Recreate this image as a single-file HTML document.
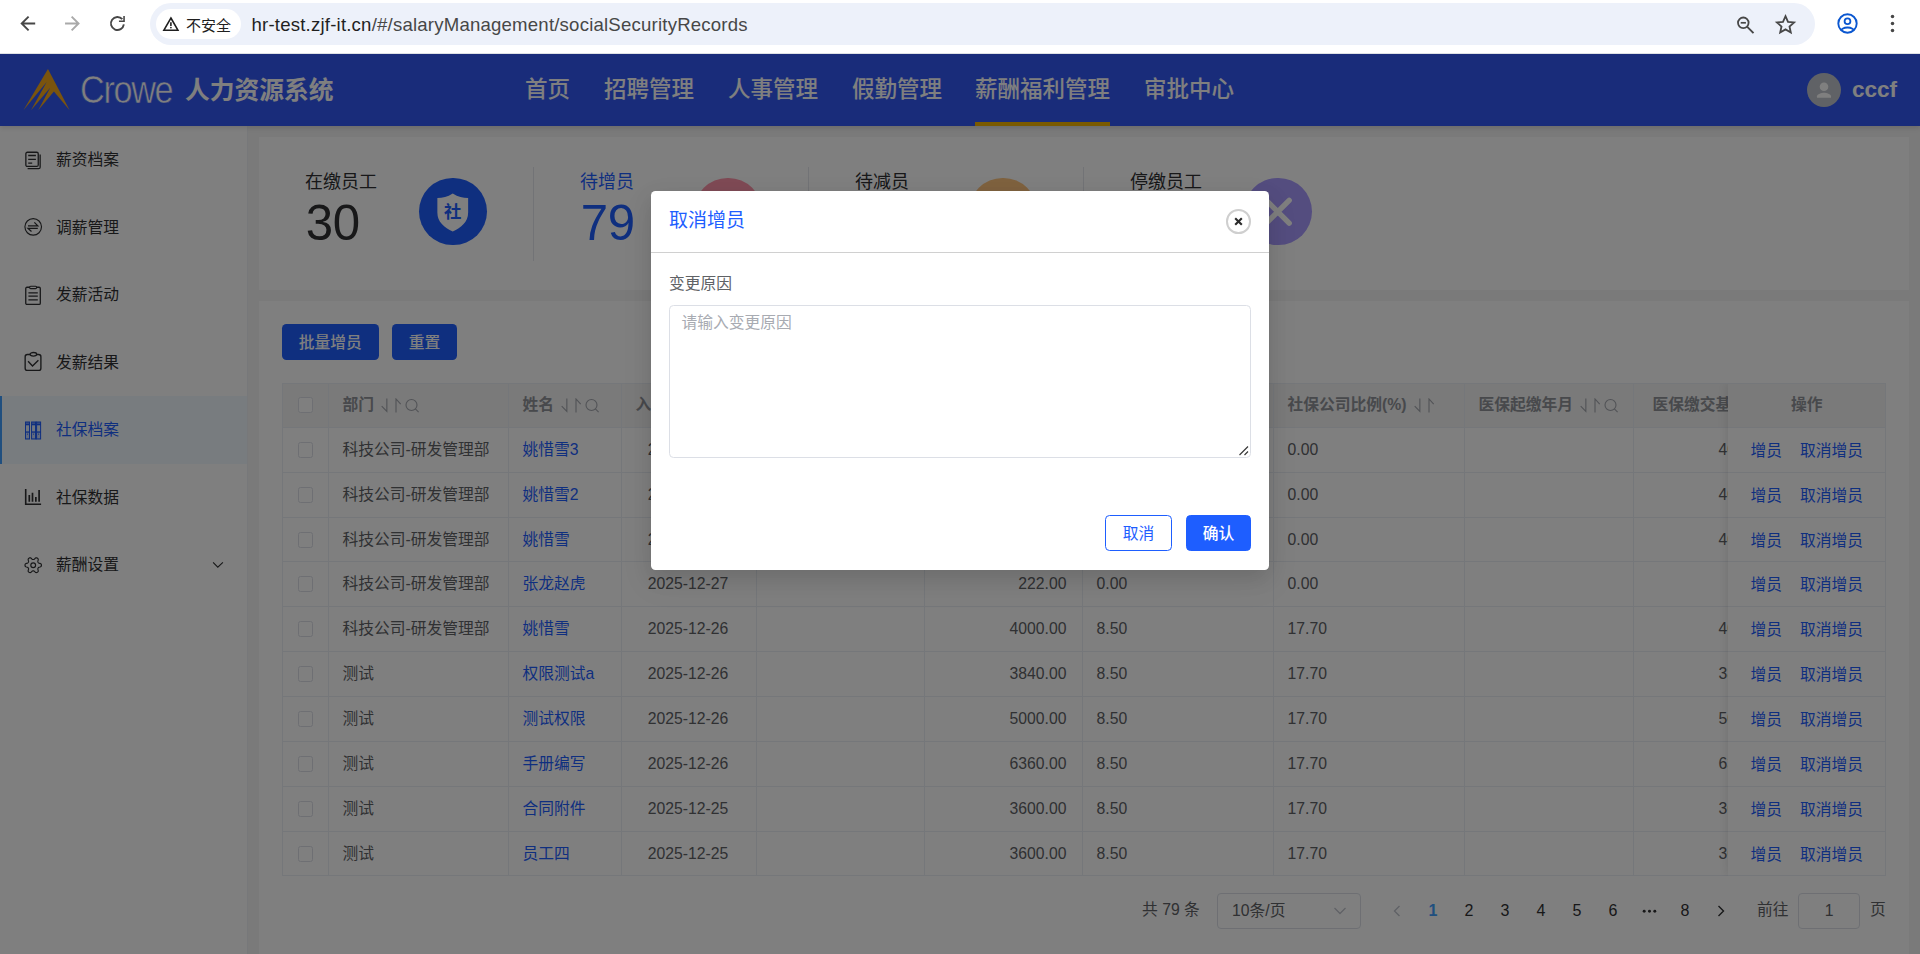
<!DOCTYPE html>
<html lang="zh-CN">
<head>
<meta charset="utf-8">
<title>社保档案</title>
<style>
*{box-sizing:border-box;margin:0;padding:0}
html,body{width:1920px;height:954px;overflow:hidden;background:#fff}
body{position:relative;font-family:"Liberation Sans","Noto Sans CJK SC",sans-serif;font-size:15.75px;color:#303133;-webkit-font-smoothing:antialiased}
.abs{position:absolute}
/* ---------- browser chrome ---------- */
#chrome{position:absolute;left:0;top:0;width:1920px;height:54px;background:#fff;border-bottom:1px solid #dfe1e5;z-index:50}
#chrome svg{position:absolute;overflow:visible}
#omni{position:absolute;left:150px;top:3px;width:1665px;height:42px;border-radius:21px;background:#edf1fa}
#chip{position:absolute;left:6px;top:6px;width:85px;height:30px;border-radius:15px;background:#fff}
#chip span{position:absolute;left:30px;top:2px;line-height:30px;font-size:15px;color:#1f1f1f;white-space:nowrap}
#url span{color:#474747}
#url{position:absolute;left:101.500px;top:0.800px;line-height:41px;font-size:18.600px;color:#1f1f1f;white-space:nowrap;letter-spacing:0.2px}
/* ---------- app header ---------- */
#hdr{position:absolute;left:0;top:54px;width:1920px;height:72px;background:#3259f5;z-index:5;box-shadow:0 2px 5px rgba(0,0,0,.12)}
#hdr .crowe{position:absolute;left:79.500px;top:0.300px;line-height:72px;font-size:38.500px;color:#fff;letter-spacing:-1.500px;font-weight:400;-webkit-text-stroke:0.600px #3259f5;transform:scaleX(0.89);transform-origin:0 50%}
#hdr .sys{position:absolute;left:185px;top:1.700px;line-height:70px;font-size:24.75px;font-weight:700;color:#fff;white-space:nowrap}
#hdr .nav{position:absolute;top:1.500px;line-height:68px;font-size:22.5px;color:#fff;white-space:nowrap;font-weight:500}
#hdr .nav.on:after{content:"";position:absolute;left:0;right:0;top:66.500px;height:4px;background:#f5b400}
#hdr .ava{position:absolute;left:1807px;top:19px;width:34px;height:34px;border-radius:50%;background:#c0c4cc;overflow:hidden}
#hdr .user{position:absolute;left:1852px;top:1px;line-height:70px;font-size:22.5px;font-weight:700;color:#fff}
/* ---------- sidebar ---------- */
#side{position:absolute;left:0;top:126px;width:247px;height:828px;background:#fff;z-index:2}
.mi{position:absolute;left:0;width:247px;height:67.5px;line-height:67.5px;color:#303133;font-size:15.75px}
.mi span{position:absolute;left:56px;top:0;white-space:nowrap}
.mi svg{position:absolute;left:23px;top:23.5px;width:20px;height:20px;overflow:visible}
.mi.on{background:#f1f8ff;color:#1e5eff;box-shadow:inset 2px 0 0 #409eff}
/* ---------- main ---------- */
#main{position:absolute;left:247px;top:126px;width:1673px;height:828px;background:#f4f4f4;box-shadow:inset 1px 0 0 #eff1f5}
.card{position:absolute;background:#fff}

/* stats */
.st{position:absolute;top:0;width:275px;height:153px}
.st:after{content:"";position:absolute;right:0;top:30px;width:1px;height:93.500px;background:#e4e7ed}
.st:last-child:after{display:none}
.st .lab{position:absolute;left:46px;top:33.300px;font-size:18px;line-height:24px;color:#303133;white-space:nowrap}
.st .num{position:absolute;left:46.700px;top:57.500px;font-size:49.200px;line-height:56px;color:#303133;letter-spacing:-0.3px}
.st.on .lab,.st.on .num{color:#1e5eff}
.st .cir{position:absolute;left:160px;top:40.500px;width:67.5px;height:67.5px;border-radius:50%}
.st .cir svg{width:100%;height:100%;display:block}
.btn{position:absolute;height:35.600px;line-height:38.800px;font-weight:500;border-radius:4.500px;background:#1e5eff;color:#fff;text-align:center;font-size:15.75px}
/* table */
#tb{position:absolute;border:1px solid #ebeef5;border-right:none;border-bottom:none;overflow:hidden;color:#606266;background:#fff}
#tb .hr{position:absolute;left:0;right:0;background:#f4f4f4;border-bottom:1px solid #ebeef5}
#tb .rl{position:absolute;left:0;right:0;height:1px;background:#ebeef5}
#tb .vl{position:absolute;top:0;bottom:0;width:1px;background:#ebeef5}
#tb .c{position:absolute;padding:0 13.5px;white-space:nowrap;overflow:hidden}
#tb .c.h{color:#909399;margin-top:-1px}
#tb .hc .cb{top:13px}
#tb .c.h b{font-weight:700}
#tb .c.ctr{text-align:center}
#tb .c.r{text-align:right;padding-right:15.500px}
#tb .c.x{padding-left:84.500px;padding-right:0}
#tb .c.h.x{padding-left:18.500px}
#tb .c.d{padding-right:15.500px}
#tb .c.ck{padding:0}
#tb a{color:#1e5eff}
#tb .op a{margin:0 9px}
#tb .c.op{padding-right:15.500px}
#tb #fx .c.h{padding-right:13px}
.cb{position:absolute;left:14.500px;top:13.800px;width:15.750px;height:15.750px;border:1px solid #dcdfe6;border-radius:2.500px;background:#fff}
.si{width:21px;height:15px;vertical-align:-2.500px;margin-left:7px}
.sq{width:14px;height:15px;vertical-align:-2.500px;margin-left:2.500px}
#fx{position:absolute;background:#fff;border-right:1px solid #ebeef5;box-shadow:0 0 10px rgba(0,0,0,.12)}
/* pagination */
#pgn{position:absolute;left:0;width:1673px;height:34.5px;line-height:34.5px;color:#303133;font-size:15.75px}
#pgn>*{position:absolute;top:0;white-space:nowrap}
#pgn .pt{color:#606266;font-size:15.75px;margin-top:-1px}
#pgn .pn{width:36px;text-align:center;font-size:16px;color:#303133}
#pgn .pn.on{color:#409eff;font-weight:700}
#pgn .sel{top:-0.500px;height:35.500px;border:1px solid #dcdfe6;border-radius:4px;color:#606266;background:#fff}
#pgn .sel span{position:absolute;left:14px;top:0;line-height:34px}
#pgn .sel svg{position:absolute;right:13px;top:10px;width:14px;height:14px}
#pgn .ar{width:12px;height:14px;top:10px}
#pgn .dots{width:17px;height:6.400px;top:14.200px}
/* overlay + dialog */
#mask{position:absolute;left:0;top:54px;width:1920px;height:900px;background:rgba(0,0,0,.5);z-index:20}
#dlg{position:absolute;left:651px;top:191px;width:617.800px;height:379px;background:#fff;border-radius:4.500px;z-index:30;box-shadow:0 12px 32px 4px rgba(0,0,0,.05),0 8px 20px rgba(0,0,0,.1)}
#dlg .ttl{position:absolute;left:18px;top:16px;line-height:28px;font-size:19px;color:#1e5eff}
#dlg .hl{position:absolute;left:0;right:0;top:61px;height:1px;background:#d0d0d0}
#dlg .x{position:absolute;left:575.200px;top:18px;width:24.600px;height:24.600px;border:2px solid #cfcfcf;border-radius:50%}
#dlg .x svg{position:absolute;left:5.800px;top:5.800px;width:9px;height:9px}
#dlg .lb{position:absolute;left:18px;top:81.300px;line-height:24px;color:#606266;font-size:15.75px}
#dlg .ta{position:absolute;left:18px;top:114px;width:581.500px;height:152.500px;border:1px solid #dcdfe6;border-radius:4.500px}
#dlg .ta span{position:absolute;left:11.500px;top:5px;line-height:24px;color:#a8abb2;font-size:15.75px}
#dlg .ta svg{position:absolute;right:1px;bottom:1px;width:11px;height:11px}
#dlg .b{position:absolute;top:324px;height:36px;line-height:35.400px;border-radius:4.500px;text-align:center;font-size:15.75px;border:1px solid #1e5eff}
</style>
</head>
<body>

<!-- ================= browser chrome ================= -->
<div id="chrome">
  <!-- back -->
  <svg style="left:18px;top:14px" width="20" height="20" viewBox="0 0 20 20"><path d="M17.200 9.500H4.500M10.600 2.600L3.700 9.500l6.900 6.900" fill="none" stroke="#474747" stroke-width="1.900"/></svg>
  <!-- forward -->
  <svg style="left:63px;top:14px" width="20" height="20" viewBox="0 0 20 20"><path d="M2.050 9.500h12.700M8.650 2.600l6.900 6.900-6.900 6.900" fill="none" stroke="#a9a9a9" stroke-width="1.900"/></svg>
  <!-- reload -->
  <svg style="left:108px;top:14px" width="20" height="20" viewBox="0 0 20 20"><path d="M14.300 5.200A6.500 6.500 0 1 0 15.850 10.400" fill="none" stroke="#474747" stroke-width="1.900"/><path d="M16.050 2.100v5.150h-5.100" fill="none" stroke="#474747" stroke-width="1.600"/></svg>
  <div id="omni">
    <div id="chip">
      <svg style="left:6px;top:7px" width="18" height="16" viewBox="0 0 18 16"><path d="M8.900 2L15.900 14.200H1.900z" fill="none" stroke="#1f1f1f" stroke-width="1.600" stroke-linejoin="miter"/><path d="M8.900 6.300v3.700" stroke="#1f1f1f" stroke-width="1.600"/><circle cx="8.900" cy="11.600" r="0.850" fill="#1f1f1f"/></svg>
      <span>不安全</span>
    </div>
    <div id="url">hr-test.zjf-it.cn<span>/#/salaryManagement/socialSecurityRecords</span></div>
    <!-- zoom-out magnifier -->
    <svg style="left:1586px;top:12px" width="20" height="20" viewBox="0 0 20 20"><circle cx="7.300" cy="7.800" r="5.300" fill="none" stroke="#474747" stroke-width="1.800"/><path d="M11.300 11.900l6.200 6.200" stroke="#474747" stroke-width="1.900"/><path d="M4.700 7.800h5.200" stroke="#474747" stroke-width="1.700"/></svg>
    <!-- star -->
    <svg style="left:1625px;top:11px" width="21" height="20" viewBox="0 0 21 20"><path d="M10.500 2.200l2.500 5.600 6.100 0.600-4.600 4.100 1.300 6-5.300-3.100-5.300 3.100 1.300-6-4.600-4.100 6.100-0.600z" fill="none" stroke="#474747" stroke-width="1.800" stroke-linejoin="miter"/></svg>
  </div>
  <!-- profile -->
  <svg style="left:1836px;top:12px" width="23" height="23" viewBox="0 0 23 23"><defs><clipPath id="pc"><circle cx="11.500" cy="11.500" r="9.200"/></clipPath></defs><circle cx="11.500" cy="11.500" r="9.200" fill="none" stroke="#0b57d0" stroke-width="1.900"/><circle cx="11.500" cy="9.300" r="2.900" fill="none" stroke="#0b57d0" stroke-width="1.800"/><ellipse cx="11.500" cy="19.500" rx="7" ry="4" fill="none" stroke="#0b57d0" stroke-width="1.800" clip-path="url(#pc)"/></svg>
  <!-- menu dots -->
  <svg style="left:1888px;top:13px" width="9" height="21" viewBox="0 0 9 21"><circle cx="4.500" cy="3.600" r="1.750" fill="#474747"/><circle cx="4.500" cy="10.500" r="1.750" fill="#474747"/><circle cx="4.500" cy="17.400" r="1.750" fill="#474747"/></svg>
</div>

<!-- ================= app header ================= -->
<div id="hdr">
  <svg class="abs" style="left:22px;top:14px" width="50" height="44" viewBox="0 0 50 44"><path d="M25.960 1.100L47.660 42.300 31.900 23.400 16.200 42.300 28.200 19.700 9 42.300 24.700 14 1.400 42.300z" fill="#f4a81c"/></svg>
  <div class="crowe">Crowe</div>
  <div class="sys">人力资源系统</div>
  <div class="nav" style="left:525px">首页</div>
  <div class="nav" style="left:604px">招聘管理</div>
  <div class="nav" style="left:728px">人事管理</div>
  <div class="nav" style="left:852px">假勤管理</div>
  <div class="nav on" style="left:975px;letter-spacing:0">薪酬福利管理</div>
  <div class="nav" style="left:1144px">审批中心</div>
  <div class="ava"><svg width="34" height="34" viewBox="0 0 34 34"><circle cx="17" cy="13.800" r="4.300" fill="#fff"/><path d="M10 24.800v-1.600c0-2.300 4.700-3.500 7-3.500s7 1.200 7 3.500v1.600z" fill="#fff"/></svg></div>
  <div class="user">cccf</div>
</div>

<!-- ================= sidebar ================= -->
<div id="side">
  <div class="mi" style="top:0"><svg viewBox="0 0 20 20"><path d="M4.350 2.250h9.400a1.500 1.500 0 0 1 1.500 1.500v11.200a1.500 1.500 0 0 1-1.500 1.500h-9.400a1.500 1.500 0 0 1-1.500-1.500v-11.200a1.500 1.500 0 0 1 1.500-1.500z" fill="none" stroke="#303133" stroke-width="1.300"/><path d="M5.200 5.500h7.700M5.200 9.300h7.700M5.200 13.100h4" stroke="#303133" stroke-width="1.300"/><path d="M17.150 4.400v12.750a1.500 1.500 0 0 1-1.500 1.500H4.600" fill="none" stroke="#303133" stroke-width="1.300"/></svg><span>薪资档案</span></div>
  <div class="mi" style="top:67.5px"><svg viewBox="0 0 20 20"><circle cx="10.200" cy="9.850" r="8.300" fill="none" stroke="#303133" stroke-width="1.150"/><path d="M5 8.800h9.800L11.350 5.400M14.800 11.350H5l3.500 3.150" fill="none" stroke="#303133" stroke-width="1.250"/></svg><span>调薪管理</span></div>
  <div class="mi" style="top:135px"><svg viewBox="0 0 20 20"><rect x="2.750" y="2.250" width="14.550" height="17.200" rx="1.200" fill="none" stroke="#303133" stroke-width="1.300"/><rect x="6.600" y="1.300" width="7" height="2.300" rx="1" fill="#fff" stroke="#303133" stroke-width="1.100"/><path d="M5.400 7.900h9.400M5.400 11.200h9.400M5.400 14.900h9.400" stroke="#303133" stroke-width="1.250"/></svg><span>发薪活动</span></div>
  <div class="mi" style="top:202.500px"><svg viewBox="0 0 20 20"><rect x="2.150" y="2.500" width="15.750" height="15.850" rx="2.200" fill="none" stroke="#303133" stroke-width="1.350"/><ellipse cx="10.400" cy="2.300" rx="3.300" ry="1.800" fill="#fff" stroke="#303133" stroke-width="1.300"/><path d="M5.060 9.300l4.440 4.600 5.900-5.700" fill="none" stroke="#303133" stroke-width="1.400"/></svg><span>发薪结果</span></div>
  <div class="mi on" style="top:270px"><svg viewBox="0 0 20 20"><rect x="2" y="1.500" width="5" height="18" fill="#1e5eff"/><rect x="3.00" y="2.600" width="3" height="1.100" fill="#f1f8ff" opacity=".5"/><rect x="3.00" y="5.300" width="3" height="6.100" fill="#f1f8ff" opacity=".92"/><rect x="3.00" y="12.700" width="3" height="5.700" fill="#f1f8ff" opacity=".8"/><circle cx="4.50" cy="14.100" r="0.600" fill="#1e5eff"/><rect x="8.05" y="1.500" width="5" height="18" fill="#1e5eff"/><rect x="9.05" y="2.600" width="3" height="1.100" fill="#f1f8ff" opacity=".5"/><rect x="9.05" y="5.300" width="3" height="6.100" fill="#f1f8ff" opacity=".92"/><rect x="9.05" y="12.700" width="3" height="5.700" fill="#f1f8ff" opacity=".8"/><circle cx="10.55" cy="14.100" r="0.600" fill="#1e5eff"/><rect x="13.1" y="1.500" width="5" height="18" fill="#1e5eff"/><rect x="14.10" y="2.600" width="3" height="1.100" fill="#f1f8ff" opacity=".5"/><rect x="14.10" y="5.300" width="3" height="6.100" fill="#f1f8ff" opacity=".92"/><rect x="14.10" y="12.700" width="3" height="5.700" fill="#f1f8ff" opacity=".8"/><circle cx="15.60" cy="14.100" r="0.600" fill="#1e5eff"/><rect x="12.700" y="1.500" width="0.900" height="18" fill="#1e5eff"/></svg><span>社保档案</span></div>
  <div class="mi" style="top:337.500px"><svg viewBox="0 0 20 20"><path d="M2.700 2.100v15.200h15.400" fill="none" stroke="#303133" stroke-width="1.600"/><path d="M6.300 14.800V8.050M9.500 14.800V5.700M12.850 14.800v-4.700M16.100 14.800V3" stroke="#303133" stroke-width="1.700"/></svg><span>社保数据</span></div>
  <div class="mi" style="top:405px"><svg viewBox="0 0 20 20"><path d="M18.40 10.20 L18.35 10.73 L18.18 11.25 L17.74 11.70 L16.91 12.00 L16.08 12.20 L15.60 12.44 L15.34 12.73 L15.14 13.05 L14.96 13.38 L14.84 13.76 L14.87 14.29 L15.11 15.11 L15.27 15.98 L15.10 16.59 L14.74 16.99 L14.30 17.30 L13.81 17.53 L13.28 17.64 L12.67 17.48 L12.00 16.91 L11.41 16.29 L10.96 16.00 L10.57 15.92 L10.20 15.90 L9.83 15.92 L9.44 16.00 L8.99 16.29 L8.40 16.91 L7.73 17.48 L7.12 17.64 L6.59 17.53 L6.10 17.30 L5.66 16.99 L5.30 16.59 L5.13 15.98 L5.29 15.11 L5.53 14.29 L5.56 13.76 L5.44 13.38 L5.26 13.05 L5.06 12.73 L4.80 12.44 L4.32 12.20 L3.49 12.00 L2.66 11.70 L2.22 11.25 L2.05 10.73 L2.00 10.20 L2.05 9.67 L2.22 9.15 L2.66 8.70 L3.49 8.40 L4.32 8.20 L4.80 7.96 L5.06 7.67 L5.26 7.35 L5.44 7.02 L5.56 6.64 L5.53 6.11 L5.29 5.29 L5.13 4.42 L5.30 3.81 L5.66 3.41 L6.10 3.10 L6.59 2.87 L7.12 2.76 L7.73 2.92 L8.40 3.49 L8.99 4.11 L9.44 4.40 L9.83 4.48 L10.20 4.50 L10.57 4.48 L10.96 4.40 L11.41 4.11 L12.00 3.49 L12.67 2.92 L13.28 2.76 L13.81 2.87 L14.30 3.10 L14.74 3.41 L15.10 3.81 L15.27 4.42 L15.11 5.29 L14.87 6.11 L14.84 6.64 L14.96 7.02 L15.14 7.35 L15.34 7.67 L15.60 7.96 L16.08 8.20 L16.91 8.40 L17.74 8.70 L18.18 9.15 L18.35 9.67Z" fill="none" stroke="#303133" stroke-width="1.150" stroke-linejoin="round"/><circle cx="10.200" cy="10.200" r="2.400" fill="none" stroke="#303133" stroke-width="1.150"/></svg><span>薪酬设置</span>
    <svg style="left:211px;top:28px;width:13px;height:13px" viewBox="0 0 13 13"><path d="M2.100 3.400L6.800 8.100 11.900 3.300" fill="none" stroke="#303133" stroke-width="1.150"/></svg></div>
</div>

<!-- ================= main ================= -->
<div id="main">
<!--MAIN-->
<div class="card" style="left:12px;top:11px;width:1650px;height:153px">
<div class="st" style="left:0px"><div class="lab">在缴员工</div><div class="num">30</div><div class="cir" style="background:#1e5eff">
<svg viewBox="0 0 68 68"><path d="M34 15.500c5.500 3.500 10 4.500 15.500 4.700v14.500c0 9.800-7 15-15.500 19.200c-8.500-4.200-15.500-9.400-15.500-19.200V20.200c5.500-.2 10-1.200 15.500-4.700z" fill="#fff"/><text x="34" y="40.500" font-size="17.500" font-weight="700" text-anchor="middle" fill="#1e5eff" font-family="Liberation Sans,Noto Sans CJK SC,sans-serif">社</text></svg>
</div></div>
<div class="st on" style="left:275px"><div class="lab">待增员</div><div class="num">79</div><div class="cir" style="background:#ff94aa">
<svg viewBox="0 0 68 68"><path d="M34 22v24M22 34h24" stroke="#fff" stroke-width="5" stroke-linecap="round"/></svg>
</div></div>
<div class="st" style="left:550px"><div class="lab">待减员</div><div class="num">0</div><div class="cir" style="background:#ffc47e">
<svg viewBox="0 0 68 68"><path d="M22 34h24" stroke="#fff" stroke-width="5" stroke-linecap="round"/></svg>
</div></div>
<div class="st" style="left:825px"><div class="lab">停缴员工</div><div class="num">0</div><div class="cir" style="background:#a89aff">
<svg viewBox="0 0 68 68"><path d="M22.500 22.500l23 23M45.500 22.500l-23 23" stroke="#fff" stroke-width="5.500" stroke-linecap="round"/></svg>
</div></div>
</div>
<div class="card" style="left:12px;top:175px;width:1650px;height:700px"></div>
<div class="btn" style="left:35px;top:198.2px;width:96.5px">批量增员</div>
<div class="btn" style="left:145px;top:198.2px;width:65px">重置</div>
<div id="tb" style="left:35px;top:257px;width:1604px;height:493px">
<div class="hr" style="top:0;height:44px"></div>
<div class="rl" style="top:88px"></div>
<div class="rl" style="top:133px"></div>
<div class="rl" style="top:177px"></div>
<div class="rl" style="top:222px"></div>
<div class="rl" style="top:267px"></div>
<div class="rl" style="top:312px"></div>
<div class="rl" style="top:357px"></div>
<div class="rl" style="top:402px"></div>
<div class="rl" style="top:447px"></div>
<div class="rl" style="top:491px"></div>
<div class="vl" style="left:45px"></div>
<div class="vl" style="left:225px"></div>
<div class="vl" style="left:338px"></div>
<div class="vl" style="left:473px"></div>
<div class="vl" style="left:641px"></div>
<div class="vl" style="left:799px"></div>
<div class="vl" style="left:990px"></div>
<div class="vl" style="left:1181px"></div>
<div class="vl" style="left:1350px"></div>
<div class="c ck hc" style="left:0px;top:0px;width:45px;height:44px;line-height:43px"><i class="cb"></i></div>
<div class="c h" style="left:46px;top:0px;width:179px;height:44px;line-height:43px"><b>部门</b><svg class="si" viewBox="0 0 21 15"><path d="M5.850 0.500V13.400L0.700 8.100M15 14.500V1l4.700 5.200" fill="none" stroke="#a3a6ad" stroke-width="1.100"/></svg><svg class="sq" viewBox="0 0 14 15"><circle cx="6.500" cy="7" r="5.500" fill="none" stroke="#a3a6ad" stroke-width="1.100"/><path d="M10.400 10.900l3.200 3.200" stroke="#a3a6ad" stroke-width="1.100"/></svg></div>
<div class="c h" style="left:226px;top:0px;width:112px;height:44px;line-height:43px"><b>姓名</b><svg class="si" viewBox="0 0 21 15"><path d="M5.850 0.500V13.400L0.700 8.100M15 14.500V1l4.700 5.200" fill="none" stroke="#a3a6ad" stroke-width="1.100"/></svg><svg class="sq" viewBox="0 0 14 15"><circle cx="6.500" cy="7" r="5.500" fill="none" stroke="#a3a6ad" stroke-width="1.100"/><path d="M10.400 10.900l3.200 3.200" stroke="#a3a6ad" stroke-width="1.100"/></svg></div>
<div class="c h" style="left:339px;top:0px;width:134px;height:44px;line-height:43px"><b>入职日期</b><svg class="si" viewBox="0 0 21 15"><path d="M5.850 0.500V13.400L0.700 8.100M15 14.500V1l4.700 5.200" fill="none" stroke="#a3a6ad" stroke-width="1.100"/></svg><svg class="sq" viewBox="0 0 14 15"><circle cx="6.500" cy="7" r="5.500" fill="none" stroke="#a3a6ad" stroke-width="1.100"/><path d="M10.400 10.900l3.200 3.200" stroke="#a3a6ad" stroke-width="1.100"/></svg></div>
<div class="c h" style="left:474px;top:0px;width:167px;height:44px;line-height:43px"><b>社保起缴年月</b><svg class="si" viewBox="0 0 21 15"><path d="M5.850 0.500V13.400L0.700 8.100M15 14.500V1l4.700 5.200" fill="none" stroke="#a3a6ad" stroke-width="1.100"/></svg><svg class="sq" viewBox="0 0 14 15"><circle cx="6.500" cy="7" r="5.500" fill="none" stroke="#a3a6ad" stroke-width="1.100"/><path d="M10.400 10.900l3.200 3.200" stroke="#a3a6ad" stroke-width="1.100"/></svg></div>
<div class="c h r" style="left:642px;top:0px;width:157px;height:44px;line-height:43px"><b>社保缴交基数</b><svg class="si" viewBox="0 0 21 15"><path d="M5.850 0.500V13.400L0.700 8.100M15 14.500V1l4.700 5.200" fill="none" stroke="#a3a6ad" stroke-width="1.100"/></svg></div>
<div class="c h" style="left:800px;top:0px;width:190px;height:44px;line-height:43px"><b>社保个人比例(%)</b><svg class="si" viewBox="0 0 21 15"><path d="M5.850 0.500V13.400L0.700 8.100M15 14.500V1l4.700 5.200" fill="none" stroke="#a3a6ad" stroke-width="1.100"/></svg></div>
<div class="c h" style="left:991px;top:0px;width:190px;height:44px;line-height:43px"><b>社保公司比例(%)</b><svg class="si" viewBox="0 0 21 15"><path d="M5.850 0.500V13.400L0.700 8.100M15 14.500V1l4.700 5.200" fill="none" stroke="#a3a6ad" stroke-width="1.100"/></svg></div>
<div class="c h" style="left:1182px;top:0px;width:168px;height:44px;line-height:43px"><b>医保起缴年月</b><svg class="si" viewBox="0 0 21 15"><path d="M5.850 0.500V13.400L0.700 8.100M15 14.500V1l4.700 5.200" fill="none" stroke="#a3a6ad" stroke-width="1.100"/></svg><svg class="sq" viewBox="0 0 14 15"><circle cx="6.500" cy="7" r="5.500" fill="none" stroke="#a3a6ad" stroke-width="1.100"/><path d="M10.400 10.900l3.200 3.200" stroke="#a3a6ad" stroke-width="1.100"/></svg></div>
<div class="c h x" style="left:1351px;top:0px;width:94px;height:44px;line-height:43px"><b>医保缴交基数</b><svg class="si" viewBox="0 0 21 15"><path d="M5.850 0.500V13.400L0.700 8.100M15 14.500V1l4.700 5.200" fill="none" stroke="#a3a6ad" stroke-width="1.100"/></svg></div>
<div class="c ck" style="left:0px;top:44px;width:45px;height:45px;line-height:44px"><i class="cb"></i></div>
<div class="c " style="left:46px;top:44px;width:179px;height:45px;line-height:44px">科技公司-研发管理部</div>
<div class="c " style="left:226px;top:44px;width:112px;height:45px;line-height:44px"><a>姚惜雪3</a></div>
<div class="c ctr d" style="left:339px;top:44px;width:134px;height:45px;line-height:44px">2025-12-27</div>
<div class="c " style="left:474px;top:44px;width:167px;height:45px;line-height:44px"></div>
<div class="c r" style="left:642px;top:44px;width:157px;height:45px;line-height:44px">4000.00</div>
<div class="c " style="left:800px;top:44px;width:190px;height:45px;line-height:44px">0.00</div>
<div class="c " style="left:991px;top:44px;width:190px;height:45px;line-height:44px">0.00</div>
<div class="c " style="left:1182px;top:44px;width:168px;height:45px;line-height:44px"></div>
<div class="c x" style="left:1351px;top:44px;width:94px;height:45px;line-height:44px">4000.00</div>
<div class="c ck" style="left:0px;top:89px;width:45px;height:45px;line-height:44px"><i class="cb"></i></div>
<div class="c " style="left:46px;top:89px;width:179px;height:45px;line-height:44px">科技公司-研发管理部</div>
<div class="c " style="left:226px;top:89px;width:112px;height:45px;line-height:44px"><a>姚惜雪2</a></div>
<div class="c ctr d" style="left:339px;top:89px;width:134px;height:45px;line-height:44px">2025-12-27</div>
<div class="c " style="left:474px;top:89px;width:167px;height:45px;line-height:44px"></div>
<div class="c r" style="left:642px;top:89px;width:157px;height:45px;line-height:44px">4000.00</div>
<div class="c " style="left:800px;top:89px;width:190px;height:45px;line-height:44px">0.00</div>
<div class="c " style="left:991px;top:89px;width:190px;height:45px;line-height:44px">0.00</div>
<div class="c " style="left:1182px;top:89px;width:168px;height:45px;line-height:44px"></div>
<div class="c x" style="left:1351px;top:89px;width:94px;height:45px;line-height:44px">4000.00</div>
<div class="c ck" style="left:0px;top:134px;width:45px;height:44px;line-height:43px"><i class="cb"></i></div>
<div class="c " style="left:46px;top:134px;width:179px;height:44px;line-height:43px">科技公司-研发管理部</div>
<div class="c " style="left:226px;top:134px;width:112px;height:44px;line-height:43px"><a>姚惜雪</a></div>
<div class="c ctr d" style="left:339px;top:134px;width:134px;height:44px;line-height:43px">2025-12-27</div>
<div class="c " style="left:474px;top:134px;width:167px;height:44px;line-height:43px"></div>
<div class="c r" style="left:642px;top:134px;width:157px;height:44px;line-height:43px">4000.00</div>
<div class="c " style="left:800px;top:134px;width:190px;height:44px;line-height:43px">0.00</div>
<div class="c " style="left:991px;top:134px;width:190px;height:44px;line-height:43px">0.00</div>
<div class="c " style="left:1182px;top:134px;width:168px;height:44px;line-height:43px"></div>
<div class="c x" style="left:1351px;top:134px;width:94px;height:44px;line-height:43px">4000.00</div>
<div class="c ck" style="left:0px;top:178px;width:45px;height:45px;line-height:44px"><i class="cb"></i></div>
<div class="c " style="left:46px;top:178px;width:179px;height:45px;line-height:44px">科技公司-研发管理部</div>
<div class="c " style="left:226px;top:178px;width:112px;height:45px;line-height:44px"><a>张龙赵虎</a></div>
<div class="c ctr d" style="left:339px;top:178px;width:134px;height:45px;line-height:44px">2025-12-27</div>
<div class="c " style="left:474px;top:178px;width:167px;height:45px;line-height:44px"></div>
<div class="c r" style="left:642px;top:178px;width:157px;height:45px;line-height:44px">222.00</div>
<div class="c " style="left:800px;top:178px;width:190px;height:45px;line-height:44px">0.00</div>
<div class="c " style="left:991px;top:178px;width:190px;height:45px;line-height:44px">0.00</div>
<div class="c " style="left:1182px;top:178px;width:168px;height:45px;line-height:44px"></div>
<div class="c x" style="left:1351px;top:178px;width:94px;height:45px;line-height:44px"></div>
<div class="c ck" style="left:0px;top:223px;width:45px;height:45px;line-height:44px"><i class="cb"></i></div>
<div class="c " style="left:46px;top:223px;width:179px;height:45px;line-height:44px">科技公司-研发管理部</div>
<div class="c " style="left:226px;top:223px;width:112px;height:45px;line-height:44px"><a>姚惜雪</a></div>
<div class="c ctr d" style="left:339px;top:223px;width:134px;height:45px;line-height:44px">2025-12-26</div>
<div class="c " style="left:474px;top:223px;width:167px;height:45px;line-height:44px"></div>
<div class="c r" style="left:642px;top:223px;width:157px;height:45px;line-height:44px">4000.00</div>
<div class="c " style="left:800px;top:223px;width:190px;height:45px;line-height:44px">8.50</div>
<div class="c " style="left:991px;top:223px;width:190px;height:45px;line-height:44px">17.70</div>
<div class="c " style="left:1182px;top:223px;width:168px;height:45px;line-height:44px"></div>
<div class="c x" style="left:1351px;top:223px;width:94px;height:45px;line-height:44px">4000.00</div>
<div class="c ck" style="left:0px;top:268px;width:45px;height:45px;line-height:44px"><i class="cb"></i></div>
<div class="c " style="left:46px;top:268px;width:179px;height:45px;line-height:44px">测试</div>
<div class="c " style="left:226px;top:268px;width:112px;height:45px;line-height:44px"><a>权限测试a</a></div>
<div class="c ctr d" style="left:339px;top:268px;width:134px;height:45px;line-height:44px">2025-12-26</div>
<div class="c " style="left:474px;top:268px;width:167px;height:45px;line-height:44px"></div>
<div class="c r" style="left:642px;top:268px;width:157px;height:45px;line-height:44px">3840.00</div>
<div class="c " style="left:800px;top:268px;width:190px;height:45px;line-height:44px">8.50</div>
<div class="c " style="left:991px;top:268px;width:190px;height:45px;line-height:44px">17.70</div>
<div class="c " style="left:1182px;top:268px;width:168px;height:45px;line-height:44px"></div>
<div class="c x" style="left:1351px;top:268px;width:94px;height:45px;line-height:44px">3840.00</div>
<div class="c ck" style="left:0px;top:313px;width:45px;height:45px;line-height:44px"><i class="cb"></i></div>
<div class="c " style="left:46px;top:313px;width:179px;height:45px;line-height:44px">测试</div>
<div class="c " style="left:226px;top:313px;width:112px;height:45px;line-height:44px"><a>测试权限</a></div>
<div class="c ctr d" style="left:339px;top:313px;width:134px;height:45px;line-height:44px">2025-12-26</div>
<div class="c " style="left:474px;top:313px;width:167px;height:45px;line-height:44px"></div>
<div class="c r" style="left:642px;top:313px;width:157px;height:45px;line-height:44px">5000.00</div>
<div class="c " style="left:800px;top:313px;width:190px;height:45px;line-height:44px">8.50</div>
<div class="c " style="left:991px;top:313px;width:190px;height:45px;line-height:44px">17.70</div>
<div class="c " style="left:1182px;top:313px;width:168px;height:45px;line-height:44px"></div>
<div class="c x" style="left:1351px;top:313px;width:94px;height:45px;line-height:44px">5000.00</div>
<div class="c ck" style="left:0px;top:358px;width:45px;height:45px;line-height:44px"><i class="cb"></i></div>
<div class="c " style="left:46px;top:358px;width:179px;height:45px;line-height:44px">测试</div>
<div class="c " style="left:226px;top:358px;width:112px;height:45px;line-height:44px"><a>手册编写</a></div>
<div class="c ctr d" style="left:339px;top:358px;width:134px;height:45px;line-height:44px">2025-12-26</div>
<div class="c " style="left:474px;top:358px;width:167px;height:45px;line-height:44px"></div>
<div class="c r" style="left:642px;top:358px;width:157px;height:45px;line-height:44px">6360.00</div>
<div class="c " style="left:800px;top:358px;width:190px;height:45px;line-height:44px">8.50</div>
<div class="c " style="left:991px;top:358px;width:190px;height:45px;line-height:44px">17.70</div>
<div class="c " style="left:1182px;top:358px;width:168px;height:45px;line-height:44px"></div>
<div class="c x" style="left:1351px;top:358px;width:94px;height:45px;line-height:44px">6360.00</div>
<div class="c ck" style="left:0px;top:403px;width:45px;height:45px;line-height:44px"><i class="cb"></i></div>
<div class="c " style="left:46px;top:403px;width:179px;height:45px;line-height:44px">测试</div>
<div class="c " style="left:226px;top:403px;width:112px;height:45px;line-height:44px"><a>合同附件</a></div>
<div class="c ctr d" style="left:339px;top:403px;width:134px;height:45px;line-height:44px">2025-12-25</div>
<div class="c " style="left:474px;top:403px;width:167px;height:45px;line-height:44px"></div>
<div class="c r" style="left:642px;top:403px;width:157px;height:45px;line-height:44px">3600.00</div>
<div class="c " style="left:800px;top:403px;width:190px;height:45px;line-height:44px">8.50</div>
<div class="c " style="left:991px;top:403px;width:190px;height:45px;line-height:44px">17.70</div>
<div class="c " style="left:1182px;top:403px;width:168px;height:45px;line-height:44px"></div>
<div class="c x" style="left:1351px;top:403px;width:94px;height:45px;line-height:44px">3600.00</div>
<div class="c ck" style="left:0px;top:448px;width:45px;height:44px;line-height:43px"><i class="cb"></i></div>
<div class="c " style="left:46px;top:448px;width:179px;height:44px;line-height:43px">测试</div>
<div class="c " style="left:226px;top:448px;width:112px;height:44px;line-height:43px"><a>员工四</a></div>
<div class="c ctr d" style="left:339px;top:448px;width:134px;height:44px;line-height:43px">2025-12-25</div>
<div class="c " style="left:474px;top:448px;width:167px;height:44px;line-height:43px"></div>
<div class="c r" style="left:642px;top:448px;width:157px;height:44px;line-height:43px">3600.00</div>
<div class="c " style="left:800px;top:448px;width:190px;height:44px;line-height:43px">8.50</div>
<div class="c " style="left:991px;top:448px;width:190px;height:44px;line-height:43px">17.70</div>
<div class="c " style="left:1182px;top:448px;width:168px;height:44px;line-height:43px"></div>
<div class="c x" style="left:1351px;top:448px;width:94px;height:44px;line-height:43px">3600.00</div>
<div id="fx" style="left:1445px;top:0;width:158px;height:492px">
<div class="hr" style="top:0;height:44px"></div>
<div class="rl" style="top:88px"></div>
<div class="rl" style="top:133px"></div>
<div class="rl" style="top:177px"></div>
<div class="rl" style="top:222px"></div>
<div class="rl" style="top:267px"></div>
<div class="rl" style="top:312px"></div>
<div class="rl" style="top:357px"></div>
<div class="rl" style="top:402px"></div>
<div class="rl" style="top:447px"></div>
<div class="rl" style="top:491px"></div>
<div class="c h ctr" style="left:0;top:0;width:157px;height:44px;line-height:43px"><b>操作</b></div>
<div class="c ctr op" style="left:0;top:44px;width:157px;height:45px;line-height:46px"><a>增员</a><a>取消增员</a></div>
<div class="c ctr op" style="left:0;top:89px;width:157px;height:45px;line-height:46px"><a>增员</a><a>取消增员</a></div>
<div class="c ctr op" style="left:0;top:134px;width:157px;height:44px;line-height:45px"><a>增员</a><a>取消增员</a></div>
<div class="c ctr op" style="left:0;top:178px;width:157px;height:45px;line-height:46px"><a>增员</a><a>取消增员</a></div>
<div class="c ctr op" style="left:0;top:223px;width:157px;height:45px;line-height:46px"><a>增员</a><a>取消增员</a></div>
<div class="c ctr op" style="left:0;top:268px;width:157px;height:45px;line-height:46px"><a>增员</a><a>取消增员</a></div>
<div class="c ctr op" style="left:0;top:313px;width:157px;height:45px;line-height:46px"><a>增员</a><a>取消增员</a></div>
<div class="c ctr op" style="left:0;top:358px;width:157px;height:45px;line-height:46px"><a>增员</a><a>取消增员</a></div>
<div class="c ctr op" style="left:0;top:403px;width:157px;height:45px;line-height:46px"><a>增员</a><a>取消增员</a></div>
<div class="c ctr op" style="left:0;top:448px;width:157px;height:44px;line-height:45px"><a>增员</a><a>取消增员</a></div>
</div>
</div>
<div id="pgn" style="top:767.5px">
<div class="pt" style="left:895px;">共 79 条</div>
<div class="sel" style="left:970px;width:143.5px"><span>10条/页</span><svg viewBox="0 0 14 14"><path d="M1.500 4l5.500 5.500L12.500 4" fill="none" stroke="#c0c4cc" stroke-width="1.300"/></svg></div>
<svg class="ar" style="left:1144px" viewBox="0 0 12 14"><path d="M8.500 2L3.500 7l5 5" fill="none" stroke="#c0c4cc" stroke-width="1.400"/></svg>
<div class="pn on" style="left:1168px">1</div>
<div class="pn" style="left:1204px">2</div>
<div class="pn" style="left:1240px">3</div>
<div class="pn" style="left:1276px">4</div>
<div class="pn" style="left:1312px">5</div>
<div class="pn" style="left:1348px">6</div>
<svg class="dots" style="left:1394px" viewBox="0 0 16 6"><circle cx="3" cy="3" r="1.400" fill="#303133"/><circle cx="8" cy="3" r="1.400" fill="#303133"/><circle cx="13" cy="3" r="1.400" fill="#303133"/></svg>
<div class="pn" style="left:1420px">8</div>
<svg class="ar" style="left:1468px" viewBox="0 0 12 14"><path d="M3.500 2l5 5-5 5" fill="none" stroke="#303133" stroke-width="1.400"/></svg>
<div class="pt" style="left:1510px;">前往</div>
<div class="sel" style="left:1550.8px;width:62.600px;text-align:center"><span style="position:static">1</span></div>
<div class="pt" style="left:1623px;">页</div>
</div>
<!--/MAIN-->
</div>

<!--OVERLAY-->
<div id="mask"></div>
<div id="dlg">
  <div class="ttl">取消增员</div>
  <div class="x"><svg viewBox="0 0 9 9"><path d="M1.200 1.200l6.600 6.600M7.800 1.200L1.200 7.800" stroke="#2b2b2b" stroke-width="2.100"/></svg></div>
  <div class="hl"></div>
  <div class="lb">变更原因</div>
  <div class="ta"><span>请输入变更原因</span><svg viewBox="0 0 11 11"><path d="M10 1.500L1.500 10M10 6.500L6.500 10" stroke="#3a3a3a" stroke-width="1.200"/></svg></div>
  <div class="b" style="left:454px;width:66.800px;color:#1e5eff;background:#fff">取消</div>
  <div class="b" style="left:535px;width:64.800px;color:#fff;background:#1e5eff;font-weight:500">确认</div>
</div>
<!--/OVERLAY-->
</body>
</html>
